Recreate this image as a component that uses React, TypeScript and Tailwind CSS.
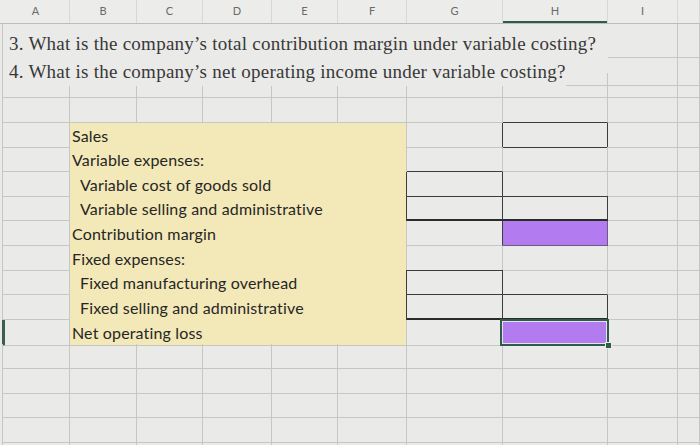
const LINE = "border-[#c6c6c4]";
const CELL = `border-r border-b ${LINE}`;
const FULL = "grid grid-cols-[68px_67px_66px_69px_66px_69px_96px_105px_70px_1fr]";
const TABLE = "grid grid-cols-[68px_337px_96px_105px_70px_1fr]";

const DARK_R = "border-r-[#3d3d3d]";
const DARK_B = "border-b-[#3d3d3d]";
const THICK_B = "border-b-2 border-b-[#2b2b2b]";
const PURPLE = "bg-[#b27cf0]";

const headers = ["A", "B", "C", "D", "E", "F", "G", "H", "I", ""];

type Row = {
  label: string;
  indent?: boolean;
  y?: string;
  g?: string;
  h?: string;
  selected?: boolean;
};

const rows: Row[] = [
  { label: "Sales", g: DARK_R, h: `${DARK_R} ${DARK_B}` },
  { label: "Variable expenses:", g: DARK_B },
  { label: "Variable cost of goods sold", indent: true, y: DARK_R, g: `${DARK_R} ${DARK_B}`, h: DARK_B },
  { label: "Variable selling and administrative", indent: true, y: DARK_R, g: `${DARK_R} ${THICK_B}`, h: `${DARK_R} ${THICK_B}` },
  { label: "Contribution margin", g: DARK_R, h: `${PURPLE} border-r-[#6c5a80] border-b-[#6c5a80]` },
  { label: "Fixed expenses:", g: DARK_B },
  { label: "Fixed manufacturing overhead", indent: true, y: DARK_R, g: `${DARK_R} ${DARK_B}`, h: DARK_B },
  { label: "Fixed selling and administrative", indent: true, y: DARK_R, g: `${DARK_R} ${THICK_B}`, h: `${DARK_R} ${THICK_B}` },
  { label: "Net operating loss", h: PURPLE, selected: true },
];

function PlainRow({ hCls = "" }: { hCls?: string }) {
  return (
    <div className={`${FULL} h-[24.65px]`}>
      <div className={`${CELL} border-l`} />
      <div className={CELL} />
      <div className={CELL} />
      <div className={CELL} />
      <div className={CELL} />
      <div className={CELL} />
      <div className={CELL} />
      <div className={`${CELL} ${hCls}`} />
      <div className={CELL} />
      <div className={CELL} />
    </div>
  );
}

function QuestionRow({ text, top, line }: { text: string; top: string; line: boolean }) {
  return (
    <div className="grid grid-cols-[606px_70px_1fr] h-[24.65px]">
      <div className={`flex border-l ${LINE}`}>
        <span
          className={`relative z-10 self-start ${top} bg-[#eaeae8] whitespace-nowrap pl-[6px] font-['Liberation_Serif',serif] text-[19px] tracking-[0.25px] leading-[28px] text-[#383838]`}
        >
          {text}
        </span>
        <div className={`flex-1 ${line ? `border-b ${LINE}` : ""}`} />
      </div>
      <div className={CELL} />
      <div className={CELL} />
    </div>
  );
}

function TableRow({ row, last }: { row: Row; last: boolean }) {
  return (
    <div className={`${TABLE} h-[24.65px]`}>
      <div
        className={`${CELL} ${row.selected ? "border-l-[3px] border-l-[#3b5d52]" : "border-l"}`}
      />
      <div
        className={`border-r ${LINE} ${last ? "border-b" : ""} bg-[#f3e8b7] ${row.y ?? ""} ${
          row.indent ? "pl-[10px]" : "pl-[2px]"
        } pt-[1px] font-['Lato',sans-serif] text-[16px] tracking-[0.15px] leading-[24px] text-[#262626] whitespace-nowrap`}
      >
        {row.label}
      </div>
      <div className={`${CELL} ${row.g ?? ""}`} />
      <div className={`${CELL} ${row.h ?? ""} relative`}>
        {row.selected && (
          <div className="absolute -left-[3px] -top-[1px] -right-[2px] -bottom-[1px] border-2 border-[#2f5c4a] shadow-[inset_0_0_0_1px_#e4e0ec]">
            <div className="absolute -right-[5px] -bottom-[5px] w-[7px] h-[7px] bg-[#2f5c4a] border border-[#eaeae8]" />
          </div>
        )}
      </div>
      <div className={CELL} />
      <div className={CELL} />
    </div>
  );
}

export default function App() {
  return (
    <div className="h-[445px] w-[700px] overflow-hidden bg-[#eaeae8]">
      <div className={`${FULL} h-[24px] pl-[2px] bg-[#ececea] border-b border-[#bdbdbb]`}>
        {headers.map((h, i) => (
          <div
            key={i}
            className="relative flex items-center justify-center border-r border-[#d8d8d6] font-['Lato',sans-serif] text-[11px] text-[#6a6a6a]"
          >
            {h}
            {h === "H" && (
              <div className="absolute left-0 right-0 bottom-[0px] h-[2px] bg-[#2f5c4a]" />
            )}
          </div>
        ))}
      </div>

      <div className="pl-[2px]">
        <QuestionRow
          text="3. What is the company’s total contribution margin under variable costing?"
          top="mt-[6px]"
          line={false}
        />
        <QuestionRow
          text="4. What is the company’s net operating income under variable costing?"
          top="mt-[9px]"
          line
        />
        <PlainRow />
        <PlainRow hCls={DARK_B} />
        {rows.map((r, i) => (
          <TableRow key={r.label} row={r} last={i === rows.length - 1} />
        ))}
        <PlainRow />
        <PlainRow />
        <PlainRow />
        <PlainRow />
        <PlainRow />
      </div>
    </div>
  );
}
